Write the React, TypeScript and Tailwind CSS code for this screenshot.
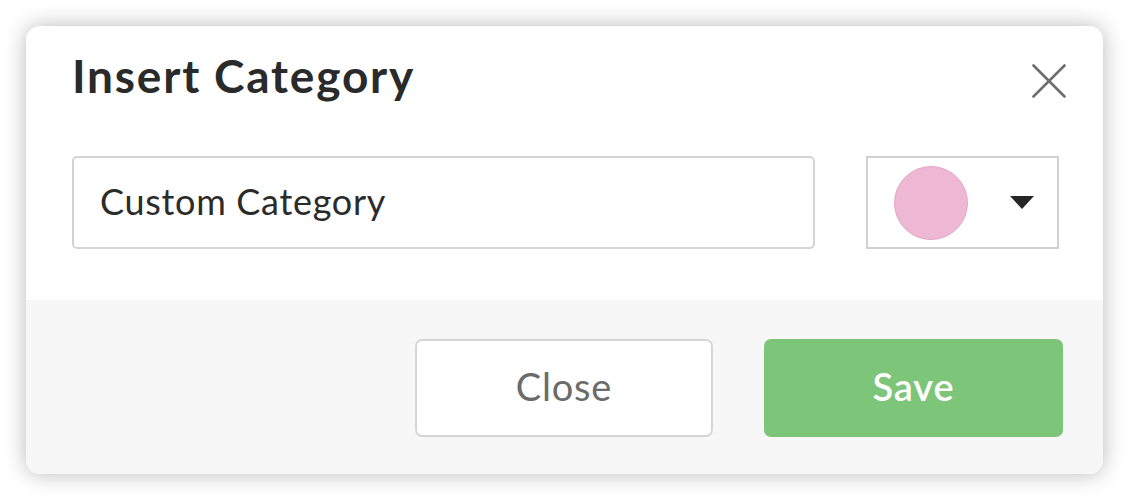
import { useState } from 'react';

function CloseIcon() {
    return (
        <svg width="34" height="34" viewBox="0 0 34 34" fill="none">
            <path d="M1.5 1.5 L32.5 32.5 M32.5 1.5 L1.5 32.5" stroke="#6e6e6e" strokeWidth="2.6" strokeLinecap="round" />
        </svg>
    );
}

function InsertCategory() {
    const [name, setName] = useState('Custom Category');

    return (
        <div className="w-[1077px] h-[448px] rounded-[14px] bg-white overflow-hidden flex flex-col shadow-[0_0_22px_rgba(0,0,0,0.28)]">
            <div className="h-[100px] flex items-center justify-between pl-[46px] pr-[37px]">
                <div className="text-[46px] leading-none font-bold text-[#2a2a2a] tracking-[1.8px]">Insert Category</div>
                <button className="mt-[10px]">
                    <CloseIcon />
                </button>
            </div>

            <div className="flex items-center pt-[30px] pb-[51px] pl-[46px] pr-[44px] gap-[51px]">
                <input
                    value={name}
                    onChange={(e) => setName(e.target.value)}
                    className="w-[743px] h-[93px] border-2 border-[#d4d4d4] rounded-[5px] px-[26px] pb-[3px] text-[36px] tracking-[0.7px] text-[#2b2b2b] outline-none"
                />
                <div className="w-[193px] h-[93px] border-2 border-[#d1d1d1] flex items-center pl-[26px] pr-[22px] justify-between">
                    <div className="w-[74px] h-[74px] rounded-full bg-[#eeb8d4] border border-[#e2a6c6]" />
                    <svg width="26" height="15" viewBox="0 0 26 15">
                        <path d="M1 1 L25 1 L13 14 Z" fill="#262626" />
                    </svg>
                </div>
            </div>

            <div className="flex-1 bg-[#f7f7f7] flex justify-end items-start pt-[39px] pr-[40px] gap-[51px]">
                <button className="w-[298px] h-[98px] pb-[3px] bg-white border-2 border-[#d6d6d6] rounded-[7px] text-[38px] tracking-[0.8px] text-[#6b6b6b]">
                    Close
                </button>
                <button className="w-[299px] h-[98px] pb-[3px] bg-[#7dc579] rounded-[7px] text-[38px] tracking-[0.8px] font-semibold text-white">
                    Save
                </button>
            </div>
        </div>
    );
}

export default function App() {
    return (
        <div className="w-[1129px] h-[499px] bg-white p-[26px] font-['Lato','Liberation_Sans',sans-serif]">
            <InsertCategory />
        </div>
    );
}
